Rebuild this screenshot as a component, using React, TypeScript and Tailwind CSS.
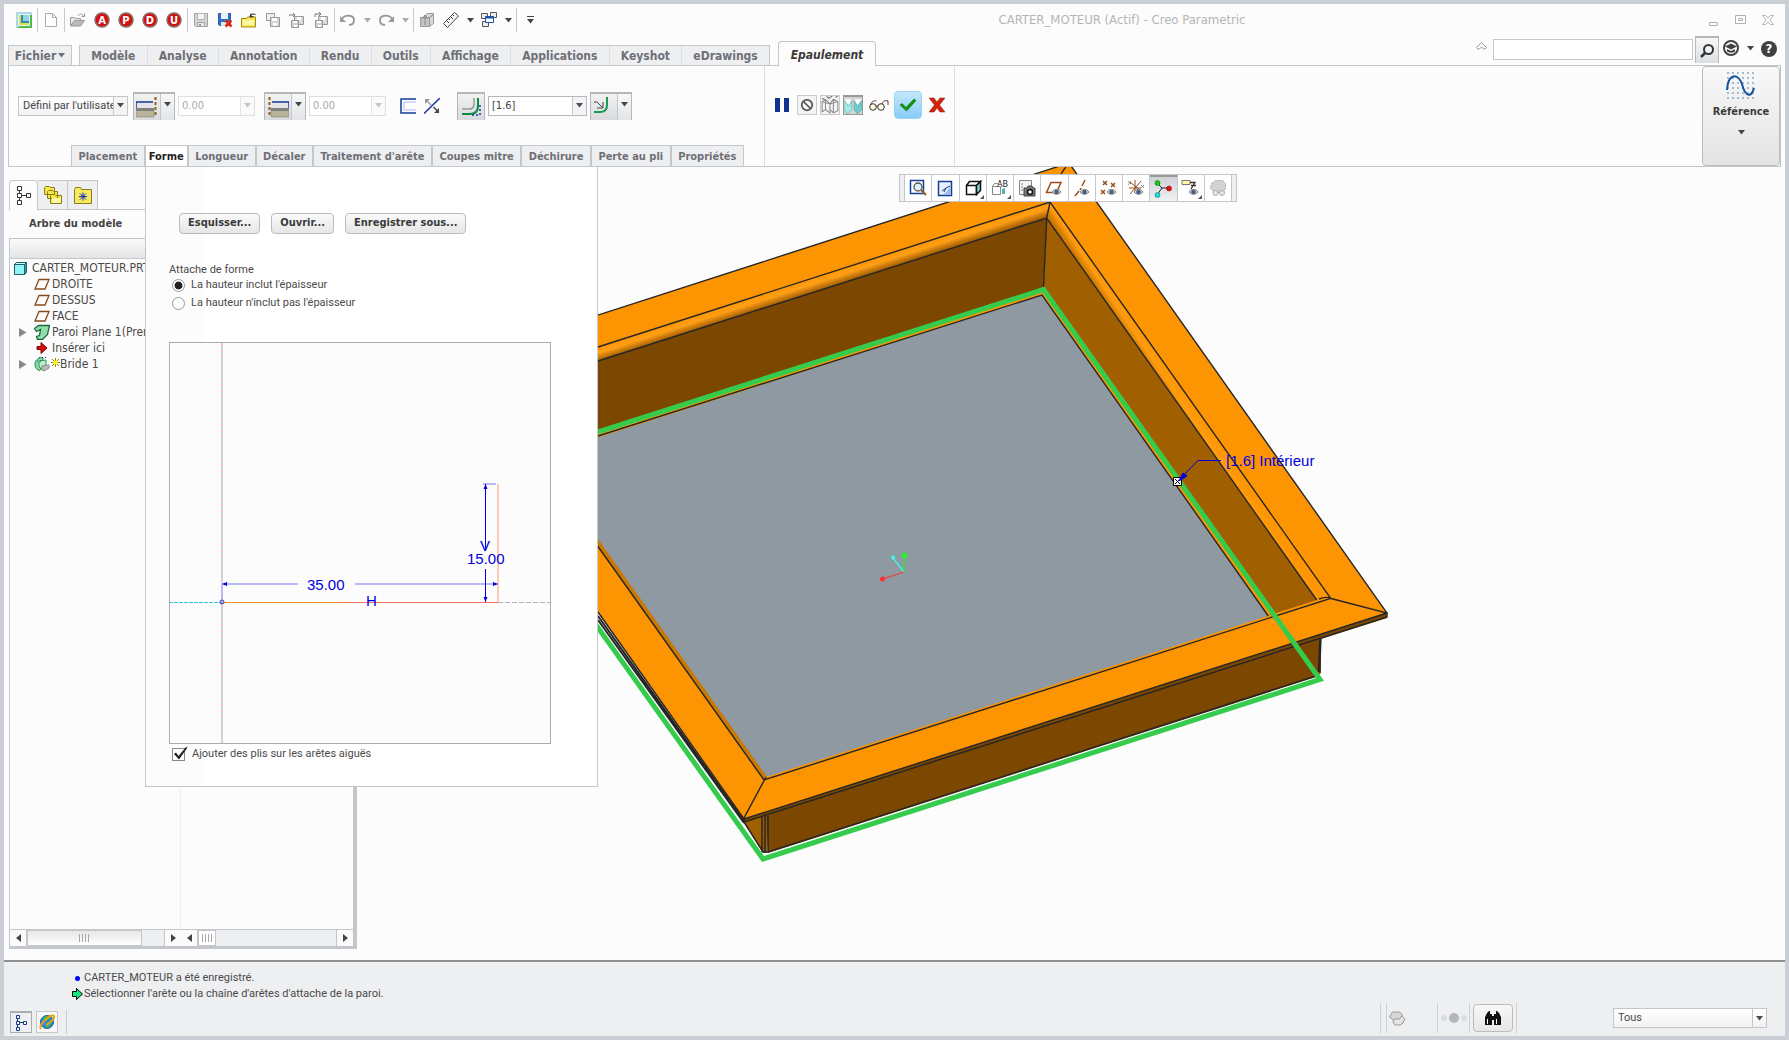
import { useState, ReactNode } from 'react';

interface IconProps {
  children: ReactNode;
  size?: number;
}

function Icon({ children, size = 16 }: IconProps) {
  return (
    <svg width={size} height={size} viewBox="0 0 16 16" fill="none" stroke="#999" aria-hidden="true" className="shrink-0">
      {children}
    </svg>
  );
}

function Caret({ color = '#444' }: { color?: string }) {
  return (
    <svg width="7" height="5" viewBox="0 0 7 5" aria-hidden="true" className="shrink-0">
      <path d="M0 0h7L3.5 4.5z" fill={color} />
    </svg>
  );
}

function Separator() {
  return <div className="w-px h-6 mx-px bg-[#c6c9cc]" />;
}

function ToolButton({ label, children }: { label: string; children: ReactNode }) {
  return (
    <button aria-label={label} className="w-6 h-6 flex items-center justify-center">
      {children}
    </button>
  );
}

function CaretButton({ label, color }: { label: string; color?: string }) {
  return (
    <button aria-label={label} className="w-[14px] h-6 flex items-center justify-center">
      <Caret color={color} />
    </button>
  );
}

function LetterIcon({ letter }: { letter: string }) {
  return (
    <svg width="16" height="16" viewBox="0 0 16 16" aria-hidden="true">
      <circle cx="8" cy="8" r="7" fill="#d01212" stroke="#8d6a6a" strokeWidth="1.5" />
      <text x="8" y="11.5" textAnchor="middle" fontSize="10" fontWeight="900" fill="#fff" className="font-['DejaVu_Sans']">
        {letter}
      </text>
    </svg>
  );
}

const floppy = (
  <>
    <path d="M1.5 1.5h13v13h-12l-1-1z" fill="#d5d5d5" stroke="#a2a2a2" />
    <path d="M4.500 1.500h7v6h-7z" fill="#f4f4f4" stroke="#b4b4b4" />
    <path d="M4.500 10.500h7v4h-7z" fill="#ececec" stroke="#a2a2a2" />
    <path d="M6 12h2v2H6z" fill="#999" stroke="none" />
  </>
);

const smallFloppy = (
  <>
    <path d="M5.500 4.500h9v8h-9z" fill="#d9d9d9" stroke="#999" />
    <path d="M8 5h4v3H8z" fill="#fff" stroke="none" />
    <path d="M2.500 8.500h7v7h-7z" fill="#d0d0d0" stroke="#999" />
    <path d="M4 9h4v2H4zM5 13h3v2H5z" fill="#fff" stroke="none" />
  </>
);

function QuickAccess() {
  return (
    <div className="flex items-center pl-2 shrink-0">
      <ToolButton label="Creo">
        <Icon>
          <rect x="0.5" y="0.5" width="15" height="15" fill="#a5d9ee" stroke="#b4d4e2" />
          <path d="M16 3v13H1l3-2h10V3z" fill="#55b848" stroke="none" />
          <path d="M2.500 2.500h11v11h-11z" fill="#d9e04c" stroke="#e6f3f8" />
          <path d="M5 3h8v8H5z" fill="#2b8fae" stroke="none" />
          <path d="M7 3h6v6H7z" fill="#8fd3e4" stroke="none" />
        </Icon>
      </ToolButton>
      <Separator />
      <ToolButton label="Nouveau">
        <Icon>
          <path d="M2.500 1.500h7l4 4v9h-11zM9.500 1.500v4h4" fill="#fff" stroke="#aaa" />
        </Icon>
      </ToolButton>
      <Separator />
      <ToolButton label="Ouvrir">
        <Icon>
          <path d="M.5 13.500v-8h4l1 1h5v2" fill="#e6e6e6" />
          <path d="M.5 14l4-5.500h10l-4 5.500z" fill="#bbb" />
          <path d="M8 4c1-2.500 4-2.500 5.500 0M14.500 1.500v3h-3" />
        </Icon>
      </ToolButton>
      {['A', 'P', 'D', 'U'].map((letter) => (
        <ToolButton key={letter} label={`Macro ${letter}`}>
          <LetterIcon letter={letter} />
        </ToolButton>
      ))}
      <Separator />
      <ToolButton label="Enregistrer">
        <Icon>{floppy}</Icon>
      </ToolButton>
      <ToolButton label="Supprimer les versions">
        <Icon>
          <path d="M1.500 1.500h12v12h-11l-1-1z" fill="#2f6fc4" stroke="#2a5aa0" />
          <path d="M4 1h7v6H4z" fill="#e8f2fb" stroke="none" />
          <path d="M4 10h6v4H4z" fill="#dfe7ef" stroke="none" />
          <path d="M8.500 8.500l6 6M14.500 8.500l-6 6" stroke="#e02a12" strokeWidth="2.5" />
        </Icon>
      </ToolButton>
      <ToolButton label="Dossier de travail">
        <Icon>
          <path d="M.5 15V6.500h5l1-1.500h8v10z" fill="#f5e94a" stroke="#a58a1c" />
          <path d="M2 8h11v5H2z" fill="#fbf7a4" stroke="none" />
          <path d="M9.500 4.500c0-2.500 3-3 5-2M10 1.500L9 5l3.500-.5" stroke="#222" />
        </Icon>
      </ToolButton>
      <ToolButton label="Copier la fenêtre">
        <Icon>
          <path d="M1.500 1.500h8v7h-8z" fill="#eee" />
          <path d="M5.500 5.500h9v9h-9z" fill="#d5d5d5" />
          <path d="M7 6h5v3H7zM8 11h4v3H8z" fill="#fff" stroke="none" />
        </Icon>
      </ToolButton>
      <ToolButton label="Enregistrer une copie">
        <Icon>
          {smallFloppy}
          <path d="M0 3h6M4 1l2 2-2 2" stroke="#777" />
        </Icon>
      </ToolButton>
      <ToolButton label="Enregistrer une sauvegarde">
        <Icon>
          {smallFloppy}
          <path d="M2 5V2h6M6 0l2 2-2 2" stroke="#777" />
        </Icon>
      </ToolButton>
      <Separator />
      <ToolButton label="Annuler">
        <Icon>
          <path d="M2 7c3-5 12-4 12 1 0 3-2 5-5 5" strokeWidth="1.800" />
          <path d="M0 4v6h6z" fill="#999" stroke="none" />
        </Icon>
      </ToolButton>
      <CaretButton label="Liste annuler" color="#aaa" />
      <ToolButton label="Rétablir">
        <Icon>
          <path d="M14 7C11 2 2 3 2 8c0 3 2 5 5 5" strokeWidth="1.800" />
          <path d="M16 4v6h-6z" fill="#999" stroke="none" />
        </Icon>
      </ToolButton>
      <CaretButton label="Liste rétablir" color="#aaa" />
      <Separator />
      <ToolButton label="Régénérer">
        <Icon>
          <path d="M1.500 5.500h9v9h-9z" fill="#c4c4c4" />
          <path d="M10.500 5.500l4-3v9l-4 3zM5 5.500l3-4h6.500v1l-4 3z" fill="#d9d9d9" />
          <path d="M3 7l3-4 3 4M6 13V4" stroke="#888" />
        </Icon>
      </ToolButton>
      <ToolButton label="Mesurer">
        <Icon>
          <path d="M.5 11.500L11.500.5l4 3.500L4.500 15.500z" fill="#f6f6f6" stroke="#444" />
          <path d="M4 9l2 2M6 7l1 1M8 5l2 2M10 3l1 1" stroke="#444" />
        </Icon>
      </ToolButton>
      <CaretButton label="Liste mesurer" />
      <ToolButton label="Fenêtres">
        <Icon>
          <path d="M.5 1.500h6v5h-6zM9.500.5h6v5h-6zM1.500 9.500h6v5h-6z" fill="#eee" stroke="#555" />
          <path d="M4.500 4.500h8v6h-8z" fill="#f7fbff" stroke="#1b53a5" />
          <path d="M4.500 5.500h8" stroke="#1b53a5" strokeWidth="2" />
        </Icon>
      </ToolButton>
      <CaretButton label="Liste fenêtres" />
      <Separator />
      <button aria-label="Personnaliser" className="w-6 h-6 flex flex-col items-center justify-center gap-[2px]">
        <span className="w-[7px] h-px bg-[#444]" />
        <Caret />
      </button>
    </div>
  );
}

const ribbonTabs = ['Modèle', 'Analyse', 'Annotation', 'Rendu', 'Outils', 'Affichage', 'Applications', 'Keyshot', 'eDrawings'];

function TabRow() {
  return (
    <div className="h-[29px] flex items-end px-1 text-[#6f6f76]">
      <button className="w-16 h-5 border border-b-0 border-[#c3c7cb] bg-[#eeeff1] text-[12px] font-bold flex items-center justify-center gap-[2px] shrink-0">
        Fichier
        <Caret color="#6f6f76" />
      </button>
      <div className="ml-[7px] w-[691px] h-5 flex border border-b-0 border-[#c3c7cb] bg-[#eeeff1] divide-x divide-[#dcdfe2] shrink-0">
        {ribbonTabs.map((tab) => (
          <button key={tab} className="flex-auto text-[12px] leading-[18px] font-bold px-[10px] whitespace-nowrap">
            {tab}
          </button>
        ))}
      </div>
      <button className="ml-2 -mb-px h-[25px] w-[98px] pt-[2px] relative border border-b-0 border-[#c3c7cb] rounded-t-sm bg-[#fcfcfc] text-[12px] font-bold italic text-[#3a3a3a] shrink-0">
        Epaulement
      </button>
      <div className="flex-1 h-full flex items-start justify-end">
        <button aria-label="Réduire le ruban" className="w-5 h-5 mr-[2px] flex items-center justify-center">
          <svg width="11" height="8" viewBox="0 0 11 8" fill="#fff" stroke="#999" aria-hidden="true">
            <path d="M.5 5.500l5-5 5 5-1.500 1.500h-1.500l-2-2-2 2H2z" />
          </svg>
        </button>
        <input aria-label="Rechercher" className="mt-[3px] w-[200px] h-[21px] border border-[#c3c7cb] bg-white px-1 text-[11px]" />
        <button aria-label="Lancer la recherche" className="ml-[2px] w-6 h-[27px] border border-t-2 border-b-0 border-[#b4b8bc] bg-linear-to-b from-[#f7f7f7] to-[#dcdfe3] flex items-center justify-center">
          <Icon>
            <circle cx="9.500" cy="6.500" r="4.500" stroke="#333" strokeWidth="2" fill="#eef6fb" />
            <path d="M6 10l-4 4" stroke="#333" strokeWidth="2.500" />
          </Icon>
        </button>
        <button aria-label="Centre de formation" className="ml-1 mt-1 w-4 h-4">
          <Icon>
            <circle cx="8" cy="8" r="7" fill="#fff" stroke="#404040" strokeWidth="2" />
            <path d="M2 6.500l6-3 6 3-6 3z" fill="#404040" stroke="none" />
            <path d="M4 9l4 2 4-2v2.500c-2 1.500-6 1.500-8 0z" fill="#404040" stroke="none" />
          </Icon>
        </button>
        <div className="w-[18px] flex justify-end">
          <CaretButton label="Liste formation" />
        </div>
        <button aria-label="Aide" className="ml-1 mt-[5px] w-4 h-4 rounded-full bg-[#404040] text-white text-[13px] leading-4 font-bold text-center">
          ?
        </button>
        <div className="w-1" />
      </div>
    </div>
  );
}

const thickness = (
  <>
    <path d="M0 16V6h17" stroke="#123a94" strokeWidth="1.500" />
    <path d="M1 7h16v6H1z" fill="#e4e4e6" stroke="none" />
    <path d="M0 14h18v7H0z" fill="#b9b49b" stroke="#777" strokeWidth="0.500" />
    <path d="M0 13.500h18" stroke="#808080" strokeWidth="3" />
    <path d="M19.500 1v20" stroke="#8a6014" strokeWidth="2" strokeDasharray="3 2" />
  </>
);

function SplitButton({ label, children }: { label: string; children: ReactNode }) {
  return (
    <div className="flex h-7 w-[42px] border border-t-2 border-b-0 border-[#b4b8bc] bg-linear-to-b from-[#f8f8f8] to-[#e2e4e7] shrink-0">
      <button aria-label={label} className="w-[27px] flex items-center justify-center border-r border-[#c3c7cb] bg-linear-to-b from-[#f2f2f2] to-[#d8dade]">
        {children}
      </button>
      <button aria-label={`Liste ${label}`} className="flex-1 pb-1 flex items-center justify-center">
        <Caret />
      </button>
    </div>
  );
}

interface ComboFieldProps {
  label: string;
  initial: string;
  disabled?: boolean;
}

function ComboField({ label, initial, disabled }: ComboFieldProps) {
  const [value, setValue] = useState(initial);

  return (
    <div className={disabled ? 'flex w-[77px] h-5 border border-[#dcdfe2] bg-white' : 'flex w-[99px] h-5 border border-[#b4b8bc] bg-white'}>
      <input
        aria-label={label}
        value={value}
        disabled={disabled}
        onChange={(e) => setValue(e.target.value)}
        className="flex-1 min-w-0 px-[3px] pt-px text-[11px] text-[#444] disabled:text-[#aaa]"
      />
      <button
        aria-label={`Liste ${label}`}
        disabled={disabled}
        className={disabled ? 'w-[14px] border-l border-[#e2e4e6] bg-[#fafafa] flex items-center justify-center' : 'w-[14px] border-l border-[#c3c7cb] bg-[#f2f3f4] flex items-center justify-center'}
      >
        <Caret color={disabled ? '#c4c4c4' : '#4a4a52'} />
      </button>
    </div>
  );
}

const panelTabs = ['Placement', 'Forme', 'Longueur', 'Décaler', "Traitement d'arête", 'Coupes mitre', 'Déchirure', 'Perte au pli', 'Propriétés'];

function Ribbon() {
  return (
    <div className="mx-1 h-[102px] border border-[#c3c7cb] flex">
      <div className="w-[756px] shrink-0 border-r border-[#dcdfe2] flex flex-col">
        <div className="flex-1 flex items-center pl-[9px]">
          <div className="relative w-[110px] h-5 shrink-0">
            <select
              aria-label="Type de forme"
              className="block appearance-none w-full h-5 border border-[#c3c7cb] bg-linear-to-b from-white to-[#f2f2f2] pl-1 pr-3 text-[11px] leading-[18px] text-[#444] font-['Roboto',sans-serif]"
            >
              <option>Défini par l'utilisateur</option>
            </select>
            <span className="absolute right-px top-px bottom-px w-[14px] border-l border-[#c3c7cb] bg-[#f4f4f4] flex items-center justify-center pointer-events-none">
              <Caret color="#4a4a52" />
            </span>
          </div>
          <div className="ml-[5px] flex items-center gap-[3px]">
            <SplitButton label="Première extrémité">
              <svg width="22" height="22" viewBox="0 0 22 22" fill="none" aria-hidden="true">{thickness}</svg>
            </SplitButton>
            <ComboField label="Première valeur" initial="0.00" disabled />
          </div>
          <div className="ml-[9px] flex items-center gap-[3px]">
            <SplitButton label="Seconde extrémité">
              <svg width="22" height="22" viewBox="0 0 22 22" fill="none" aria-hidden="true" className="-scale-x-100">{thickness}</svg>
            </SplitButton>
            <ComboField label="Seconde valeur" initial="0.00" disabled />
          </div>
          <div className="ml-[10px] flex">
            <ToolButton label="Changer de côté">
              <Icon>
                <path d="M16 1H1v14h15" stroke="#123a94" strokeWidth="1.500" />
                <path d="M16 4H4v8h12" stroke="#b5b5ff" />
              </Icon>
            </ToolButton>
            <ToolButton label="Inverser la direction">
              <Icon>
                <path d="M0 15.500L16 0" stroke="#123a94" strokeWidth="1.500" />
                <path d="M7 7L3 3" stroke="#999" strokeWidth="1.500" />
                <path d="M1 1h5L1 6z" fill="#999" stroke="none" />
                <path d="M9.500 9L13 12.500" stroke="#444" strokeWidth="1.500" />
                <path d="M15 15h-5l5-5z" fill="#444" stroke="none" />
              </Icon>
            </ToolButton>
          </div>
          <button aria-label="Rayon de pli" className="ml-[13px] w-7 h-7 border border-t-2 border-b-0 border-[#b4b8bc] bg-linear-to-b from-[#f2f2f2] to-[#d8dade] flex items-center justify-center">
            <svg width="20" height="20" viewBox="0 0 20 20" fill="none" aria-hidden="true">
              <path d="M1 12h7q5 0 5-5V1" stroke="#999" strokeWidth="1.500" />
              <path d="M1 17h8q8 0 8-8V1" stroke="#0b8a42" strokeWidth="2" />
              <path d="M11 18h8M19 8v10" stroke="#123a94" strokeWidth="1.500" strokeDasharray="2 2" />
            </svg>
          </button>
          <div className="ml-[3px] flex items-center gap-[3px]">
            <ComboField label="Rayon" initial="[1.6]" />
            <SplitButton label="Côté du rayon">
              <svg width="20" height="20" viewBox="0 0 20 20" fill="none" aria-hidden="true">
                <path d="M0 15h6q7 0 7-7V0" stroke="#1c9a55" strokeWidth="2" />
                <path d="M0 5h3l5 5M9 5v6H3" stroke="#444" />
              </svg>
            </SplitButton>
          </div>
        </div>
        <div role="tablist" className="h-[21px] ml-[62px] w-[673px] flex">
          {panelTabs.map((tab) => (
            <button
              key={tab}
              role="tab"
              aria-selected={tab === 'Forme'}
              className={
                tab === 'Forme'
                  ? 'px-[3px] pt-[2px] bg-white border border-b-0 border-[#c3c7cb] text-[11px] font-bold text-[#1f1f1f] whitespace-nowrap'
                  : 'flex-auto px-[5px] pt-[2px] bg-[#eeeff1] border border-b-0 border-[#c3c7cb] text-[11px] font-bold text-[#6f6f76] whitespace-nowrap'
              }
            >
              {tab}
            </button>
          ))}
        </div>
      </div>
      <div className="w-[190px] shrink-0 border-r border-[#dcdfe2] pl-2 pb-[22px] flex items-center">
        <button aria-label="Pause" className="w-5 h-5 ml-px flex items-center gap-1 pl-px">
          <span className="w-[5px] h-[14px] bg-[#103393]" />
          <span className="w-[5px] h-[14px] bg-[#103393]" />
        </button>
        <div className="ml-[3px] flex items-center gap-[3px]">
          <button aria-label="Sans aperçu" className="w-5 h-5 border border-[#c9c9c9] bg-[#f4f4f4] flex items-center justify-center">
            <Icon size={14}>
              <circle cx="8" cy="8" r="6" stroke="#555" strokeWidth="2" />
              <path d="M4 4l8 8" stroke="#555" strokeWidth="2" />
            </Icon>
          </button>
          <button aria-label="Aperçu filaire" className="w-5 h-5 border border-[#c9c9c9] bg-[#f4f4f4] flex items-center justify-center">
            <Icon size={18}>
              <path d="M1 5l3-2 4 4v8l-4-3-3 2zM8 7l3-4 4 2v8l-4 2-3-3M4 3v9M11 3v12M1 5l7 2 7-2" stroke="#888" strokeWidth=".9" />
              <path d="M5 0l2 2 3-2M1 2l2 1M13 1l2-1" stroke="#777" />
            </Icon>
          </button>
          <button aria-label="Aperçu attaché" className="w-5 h-5 border border-t-2 border-[#999] bg-[#d3d3d3] flex items-center justify-center">
            <Icon size={18}>
              <path d="M0 3l4 5 3-5v8l-4 4-3-4z" fill="#a4ebe6" stroke="#4aa6a4" strokeWidth=".5" />
              <path d="M9 3l3 5 4-5v8l-4 4-3-4z" fill="#6dcdca" stroke="#4aa6a4" strokeWidth=".5" />
              <path d="M0 2h7l-3 5zM9 2h7l-4 5z" fill="#fff" stroke="none" />
            </Icon>
          </button>
        </div>
        <button aria-label="Vérifier" className="ml-[6px] w-5 h-5 flex items-center justify-center">
          <svg width="20" height="14" viewBox="0 0 20 14" fill="none" stroke="#333" aria-hidden="true">
            <circle cx="4" cy="9" r="3.300" fill="#fffee0" />
            <circle cx="12" cy="9" r="3.300" fill="#fffee0" />
            <path d="M7 8h2M1.500 7c1-3 3-5 6-4M13 6c1-3 3-4 6-3v4" stroke="#6b2d2d" />
          </svg>
        </button>
        <button aria-label="Valider" className="ml-[5px] w-7 h-7 border border-[#9fd3f3] rounded-sm bg-linear-to-b from-[#c4e6fb] to-[#86cdf7] flex items-center justify-center">
          <svg width="18" height="14" viewBox="0 0 18 14" aria-hidden="true">
            <path d="M1 7l2-1.500 4 4L15 1l2 1.500L7.500 13z" fill="#0b9a0b" stroke="#066b06" strokeWidth=".6" />
          </svg>
        </button>
        <button aria-label="Annuler la fonction" className="ml-[7px] w-5 h-5 flex items-center">
          <Icon>
            <path d="M0 1h5l3 4 3-4h5l-5.500 7 5.500 7h-5l-3-4-3 4H0l5.500-7z" fill="#d42109" stroke="#8f1606" strokeWidth=".5" />
          </Icon>
        </button>
      </div>
      <div className="flex-1 flex justify-end">
        <button className="w-[78px] h-full border border-[#b9bdc1] rounded-sm bg-linear-to-b from-[#f8f8f8] to-[#e4e4e4] flex flex-col items-center pt-1 text-[#3a3a3a]">
          <svg width="30" height="30" viewBox="0 0 30 30" fill="none" aria-hidden="true">
            {[1, 6, 11, 16, 21, 26].map((y) => (
              <path key={y} d={`M1 ${y + 1}h28`} stroke="#a3bccb" strokeWidth="2" strokeDasharray="2 3" />
            ))}
            <path d="M1 19C2 2 12 2 16 13c3 12 9 15 12 4" stroke="#1550a0" strokeWidth="2" />
          </svg>
          <span className="mt-[3px] text-[11px] leading-4 font-bold">Référence</span>
          <span className="mt-[10px]">
            <Caret />
          </span>
        </button>
      </div>
    </div>
  );
}

const datum = <path d="M5 3.500h10l-4 9.500H1z" stroke="#8b4a1c" strokeWidth="1.300" />;

const treeItems = [
  { label: 'DROITE', icon: datum },
  { label: 'DESSUS', icon: datum },
  { label: 'FACE', icon: datum },
  {
    label: 'Paroi Plane 1(Prem',
    expandable: true,
    icon: <path d="M.5 4.500l4-3h11l-2 9-5 5h-5l-1-3 3-1 1-6-4 2z" fill="#93dcae" stroke="#1a6b3c" strokeWidth="1.300" />,
  },
  {
    label: 'Insérer ici',
    icon: <path d="M3 6.500h4v-4l6 5.500-6 5.500v-4H3z" fill="#d80d0d" stroke="#7d0606" />,
  },
  {
    label: 'Bride 1',
    expandable: true,
    isNew: true,
    icon: (
      <>
        <path d="M9 1.500c-5 0-8 3-8 7s3 6 5 6l1-2c-2-2-1-4 2-4z" fill="#8ddba8" stroke="#1f8a44" />
        <path d="M5 5l7-1v6l-5 3-2-3z" fill="#b8ecca" stroke="#2f9a55" />
        <path d="M8 10l7-1v3l-5 3-2-1z" fill="#bbb" stroke="#888" />
        <path d="M5 1.500h7M3 5h4" stroke="#173a9a" strokeDasharray="1 2" />
      </>
    ),
  },
];

function ScrollBar({ label, thumb }: { label: string; thumb: 'wide' | 'narrow' }) {
  return (
    <div aria-label={label} className="flex flex-1 h-[18px] bg-[#eeeff1] border-y border-[#c3c7cb]">
      <button aria-label="Défiler à gauche" className="w-[17px] bg-[#fafafa] border-r border-[#c3c7cb] flex items-center justify-center">
        <svg width="5" height="8" viewBox="0 0 5 8" aria-hidden="true"><path d="M5 0v8L0 4z" fill="#444" /></svg>
      </button>
      <div
        className={
          thumb === 'wide'
            ? 'w-[115px] border border-[#c3c7cb] bg-linear-to-b from-[#e8e8e8] to-white flex items-center justify-center gap-px'
            : 'w-[18px] border border-[#c3c7cb] bg-white flex items-center justify-center gap-px'
        }
      >
        {[0, 1, 2, 3].map((i) => (
          <span key={i} className="w-[2px] h-2 border-l border-[#a8a8a8]" />
        ))}
      </div>
      <div className="flex-1" />
      <button aria-label="Défiler à droite" className="w-[17px] bg-[#fafafa] border-l border-[#c3c7cb] flex items-center justify-center">
        <svg width="5" height="8" viewBox="0 0 5 8" aria-hidden="true"><path d="M0 0v8l5-4z" fill="#444" /></svg>
      </button>
    </div>
  );
}

function TreeIcon({ color }: { color: string }) {
  return (
    <svg width="14" height="20" viewBox="0 0 14 20" fill="#fff" stroke={color} aria-hidden="true">
      <path d="M2.500 5v9M5 9.500h4" />
      <path d="M.5.5h4v4h-4zM.5 7.500h4v4h-4zM.5 14.500h4v4h-4zM9.500 7.500h4v4h-4z" />
    </svg>
  );
}

function ModelTree() {
  return (
    <aside className="w-[348px] ml-[5px] mt-[13px] mb-[11px] shrink-0 flex flex-col">
      <div className="flex h-[30px]">
        <button aria-label="Arbre du modèle" className="w-[29px] border border-b-0 border-[#c3c7cb] rounded-t-sm flex items-center justify-center">
          <TreeIcon color="#333" />
        </button>
        <button aria-label="Navigateur de dossiers" className="w-[30px] border border-l-0 border-[#c3c7cb] bg-[#eeeff1] flex items-center justify-center">
          <svg width="20" height="20" viewBox="0 0 20 20" fill="#f5e94a" stroke="#8f7a1c" aria-hidden="true">
            <path d="M1.500 9.500v-7l1-1h4l1 1h4v7zM4.500 13.500v-7l1-1h4l1 1h4v7zM7.500 18.500v-8l1-1h3l1 1h6v8z" />
            <path d="M9 13h9v5H9z" fill="#fbf7a4" stroke="none" />
          </svg>
        </button>
        <button aria-label="Favoris" className="w-[30px] border border-l-0 border-[#c3c7cb] bg-[#eeeff1] flex items-center justify-center">
          <svg width="18" height="17" viewBox="0 0 18 17" aria-hidden="true">
            <path d="M.5 16.500v-14l1-2h5l1 2h10v14z" fill="#f5ea60" stroke="#8f7a1c" />
            <path d="M9 5.500v8M5 9.500h8M6 6.500l6 6M12 6.500l-6 6" stroke="#1728b8" />
          </svg>
        </button>
        <div className="flex-1 border-b border-[#c3c7cb]" />
      </div>
      <div className="h-7 pl-5 text-[11px] leading-7 font-bold text-[#444]">Arbre du modèle</div>
      <div className="flex-1 flex flex-col border border-r-4 border-b-2 border-[#c3c7cb]">
        <div className="h-5 border-b border-[#c3c7cb] bg-linear-to-b from-[#fafafa] to-[#e4e5e7]" />
        <div className="flex-1 flex">
          <ul className="w-[171px] pl-1 pt-px border-r border-[#eceff2] text-[12px] leading-4 text-[#4a4a4a] overflow-hidden whitespace-nowrap">
            <li className="flex items-center gap-[5px]">
              <svg width="13" height="13" viewBox="0 0 13 13" stroke="#1f5f63" aria-hidden="true">
                <path d="M.5 2.500h10v10H.5z" fill="#8ff3f7" />
                <path d="M.5 2.500l2-2h10l-2 2z" fill="#c9fbfc" />
                <path d="M12.500.5v10l-2 2v-10z" fill="#3aa0a5" />
              </svg>
              CARTER_MOTEUR.PRT
            </li>
            {treeItems.map((item) => (
              <li key={item.label} className="flex items-center pl-[5px]">
                <span className="w-[15px] flex items-center">
                  {item.expandable && (
                    <svg width="8" height="9" viewBox="0 0 8 9" aria-hidden="true"><path d="M0 0v9l7.500-4.500z" fill="#8a8a8a" /></svg>
                  )}
                </span>
                <Icon>{item.icon}</Icon>
                {item.isNew ? (
                  <svg width="9" height="9" viewBox="0 0 9 9" aria-hidden="true" className="ml-px mb-[3px]">
                    <path d="M4.500 0v9M0 4.500h9M1 1l7 7M8 1L1 8" stroke="#9a8a00" />
                    <circle cx="4.500" cy="4.500" r="2" fill="#ff0" />
                  </svg>
                ) : (
                  <span className="w-[2px]" />
                )}
                {item.label}
              </li>
            ))}
          </ul>
        </div>
        <div className="flex">
          <div className="w-[171px] flex"><ScrollBar label="Défilement arbre" thumb="wide" /></div>
          <ScrollBar label="Défilement colonnes" thumb="narrow" />
        </div>
      </div>
    </aside>
  );
}

function ModelView() {
  return (
    <svg className="w-full h-full" fill="none" aria-label="Modèle 3D">
      <defs>
        <linearGradient id="bendTop" gradientUnits="userSpaceOnUse" x1="890" y1="253" x2="894.500" y2="267">
          <stop offset="0" stopColor="#fd9602" />
          <stop offset="0.4" stopColor="#ff9f16" />
          <stop offset="1" stopColor="#955500" />
        </linearGradient>
        <linearGradient id="bendRight" gradientUnits="userSpaceOnUse" x1="1148" y1="340" x2="1136" y2="348">
          <stop offset="0" stopColor="#fd9602" />
          <stop offset="0.5" stopColor="#ff9c10" />
          <stop offset="1" stopColor="#c87500" />
        </linearGradient>
      </defs>
      <g transform="translate(-357 -167)">
        {/* parois extérieures sous le rebord */}
        <path d="M744 822L767 815V853H763z" fill="#a05f00" />
        <path d="M766 814L1321 637V673L1316 677 768 853z" fill="#7c4700" />
        <path d="M762 816V852M765 816V852M768 816V852M744 822L763 852H768L1316 676" stroke="#262626" strokeWidth="1.500" />
        <path d="M1320.500 637L1319 672" stroke="#262626" strokeWidth="2.500" />

        {/* rebord */}
        <path d="M400 379L1069 163 1387 613 744 819 400 333z" fill="#fd9502" />
        <path d="M400 416.500L1046.700 218 1043 290 400 493z" fill="#7c4700" />
        <path d="M1046.700 218L1317 600 1270 615 1043 290z" fill="#a05f00" />
        <path d="M400 410L1050 202 1046.700 218 400 424z" fill="url(#bendTop)" />
        <path d="M1050 202L1330.700 598 1317 601 1046.700 218z" fill="url(#bendRight)" />
        <path d="M400 501L1042 295 1268 616 766 777 598 540 400 261z" fill="#8f99a1" />
        <path d="M1043 293L1274 614H1268L1042 295z" fill="#fd9502" />
        <path d="M598 539L767 777 764 780 598 546z" fill="#c97800" />
        <path d="M1387 613V618L744 823V819z" fill="#7c4700" />

        <g stroke="#262626" strokeWidth="1.400">
          <path d="M400 379L1069 163 1387 613 744 819 598 612" />
          <path d="M1066 167Q1058 176 1050 202L1046.700 218 1043.500 288" />
          <path d="M598 347L1050 202 1330.700 598.300 764 780 598 546.500" />
          <path d="M598 361L1046.700 218 1316.700 600" />
          <path d="M598 436L1042 295 1268.300 616" />
          <path d="M1319 599Q1326 596 1331 598.500L1387 613V617L744 822V818L766 777" />
          <path d="M598 616L744 821M598 620L744 823" strokeWidth="2" />
        </g>

        <path d="M400 495L1043.500 289.500 1320 679.500 763 859 400 350" stroke="#35cc4d" strokeWidth="5" />

        {/* repère */}
        <path d="M904 572L883 579" stroke="#ff3838" strokeWidth="1.300" />
        <path d="M904 572L893 558" stroke="#3ff5f5" strokeWidth="1.300" />
        <path d="M904 572V555" stroke="#35e535" strokeWidth="1.500" />
        <circle cx="882.500" cy="579" r="2.500" fill="#ff3030" />
        <circle cx="893" cy="557.500" r="2" fill="#3ff5f5" />
        <circle cx="904.500" cy="555.500" r="2.800" fill="#25f525" />

        {/* note de rayon */}
        <path d="M1173.500 477.500h8v8h-8z" fill="#fff" stroke="#000" />
        <path d="M1175 479l5 5M1180 479l-5 5" stroke="#000" />
        <path d="M1178 481L1198 460.500H1221" stroke="#0000d8" />
        <path d="M1179 481L1183 473 1187 476z" fill="#0000d8" stroke="#0000d8" />
        <text x="1226" y="466" fontSize="15" fill="#0000e0" className="font-['Liberation_Sans']">
          [1.6] Intérieur
        </text>
      </g>
    </svg>
  );
}

const eye = (
  <>
    <path d="M7 13c2-3.500 7-3.500 9 0-2 3-7 3-9 0z" fill="#d9dee2" stroke="#8a8072" />
    <circle cx="11.500" cy="13" r="1.800" fill="#3d5f8a" stroke="#3d5f8a" />
  </>
);

const corner = <path d="M20 16v4h-4z" fill="#555" stroke="none" />;

const viewTools = [
  {
    label: 'Ajuster',
    icon: (
      <>
        <path d="M1.500 1.500h13v13h-13z" fill="#fff" stroke="#153f94" strokeWidth="1.500" />
        <circle cx="9" cy="8" r="4" fill="#dff0f8" stroke="#555" strokeWidth="1.300" />
        <path d="M12 11l5 5" stroke="#9a5a28" strokeWidth="2" />
      </>
    ),
  },
  {
    label: 'Redessiner',
    icon: (
      <>
        <path d="M2.500 2.500h13v14h-13z" fill="#e8f0fd" stroke="#153f94" strokeWidth="1.500" />
        <path d="M4 16c6-1 9-5 11-11v11z" fill="#9dbbe8" stroke="none" />
        <path d="M8 13l2-4 4-2M6 12l4-3" stroke="#153f94" />
      </>
    ),
  },
  {
    label: "Style d'affichage",
    icon: (
      <>
        <path d="M2.500 6.500h10v9h-10zM2.500 6.500l3-4h11l-4 4" fill="#fff" stroke="#111" strokeWidth="1.500" />
        <path d="M12.500 6.500l4-4v9l-4 4z" fill="#7fd6d6" stroke="#111" strokeWidth="1.500" />
        {corner}
      </>
    ),
  },
  {
    label: 'Orientations enregistrées',
    icon: (
      <>
        <path d="M1.500 7.500h8v8h-8zM1.500 7.500l2-3h3" fill="#fff" stroke="#888" />
        <path d="M11 10l3-1v6h-3z" fill="#4fb3b3" stroke="none" />
        <text x="6" y="8" fontSize="9" fill="#222" stroke="none">AB</text>
        {corner}
      </>
    ),
  },
  {
    label: 'Gestionnaire de vues',
    icon: (
      <>
        <path d="M1.500 1.500h12v14h-12z" fill="#f3f3f3" stroke="#888" />
        <path d="M3 5h2M3 8h2M3 11h2" stroke="#888" />
        <path d="M6 9h3l1-2h4l1 2h2v8H6z" fill="#777" stroke="#444" />
        <circle cx="12" cy="13" r="2.500" fill="#fff" stroke="#111" strokeWidth="1.500" />
      </>
    ),
  },
  { label: 'Plans', icon: <><path d="M6 3.500h10l-4.500 10h-10z" stroke="#9a4e20" strokeWidth="1.500" />{eye}</> },
  { label: 'Axes', icon: <><path d="M12 1L9 7M8 9l-1 2M6 12l-4 5" stroke="#9a4e20" strokeWidth="1.500" />{eye}</> },
  { label: 'Points', icon: <><path d="M3 2l4 4M7 2L3 6M11 4l4 4M15 4l-4 4M1 11l4 4M5 11l-4 4" stroke="#9a4e20" strokeWidth="1.500" />{eye}</> },
  { label: 'Repères', icon: <><path d="M3 3l11 9M14 2L3 15M8 1v12M2 9h12" stroke="#9a4e20" /><path d="M1 2l3 3M4 2L1 6M14 6l3 3M17 6l-3 3" stroke="#888" />{eye}</> },
  {
    label: 'Centre de rotation',
    pressed: true,
    icon: (
      <>
        <path d="M3 3l5 5M8 8l7 0M8 8l-5 7" stroke="#222" />
        <circle cx="3.500" cy="3" r="2.500" fill="#18c818" stroke="#0a7a0a" strokeWidth=".6" />
        <circle cx="15" cy="8.500" r="2.500" fill="#e01010" stroke="#8a0808" strokeWidth=".6" />
        <circle cx="3.500" cy="15" r="2.500" fill="#25dada" stroke="#0c7f7f" strokeWidth=".6" />
      </>
    ),
  },
  {
    label: 'Annotations',
    icon: (
      <>
        <path d="M0 1.500h8v4H0z" fill="#ffff9c" stroke="#777" />
        <path d="M8 3.500h5L9 10M9 6.500h5" stroke="#333" strokeWidth="1.300" />
        {eye}
        {corner}
      </>
    ),
  },
  {
    label: 'Simulation',
    icon: (
      <>
        <path d="M2.500 4.500l4-3h7l3 3v5l-2 4h-9l-4-4z" fill="#d2d2d2" stroke="#a8a8a8" strokeDasharray="2 1" />
        <circle cx="6.500" cy="14" r="2.500" fill="#e9e9e9" stroke="#aaa" />
        <circle cx="13" cy="14" r="2.500" fill="#e9e9e9" stroke="#aaa" />
      </>
    ),
  },
];

function ViewToolbar() {
  return (
    <div className="absolute left-[895px] top-[7px] w-[338px] h-7 flex border border-[#c3c7cb] bg-[#eeeff1] px-1">
      <div className="flex-1 flex divide-x divide-[#c3c7cb] border-x border-[#c3c7cb] bg-white">
        {viewTools.map((tool) => (
          <button
            key={tool.label}
            aria-label={tool.label}
            className={
              tool.pressed
                ? 'flex-1 flex items-center justify-center bg-linear-to-b from-[#cfd2d6] to-[#f0f1f3] border-t-2 border-t-[#999]'
                : 'flex-1 flex items-center justify-center'
            }
          >
            <svg width="18" height="18" viewBox="0 0 18 18" fill="none" aria-hidden="true" className="overflow-visible">{tool.icon}</svg>
          </button>
        ))}
      </div>
    </div>
  );
}

function SketchPreview() {
  return (
    <svg width="382" height="402" viewBox="170 343 380 400" fill="none" aria-label="Esquisse" className="block border border-[#acacae] bg-[#fcfcfc]">
      <path d="M222 342V744" stroke="#eec4d2" strokeWidth="2" />
      <path d="M222 342V744" stroke="#b4dce8" strokeWidth="2" strokeDasharray="2 3" />
      <path d="M169 602.500H222" stroke="#38bfd0" strokeDasharray="4 1" />
      <path d="M498 602.500H551" stroke="#a9b6c4" strokeDasharray="5 2" />
      <path d="M222 602.500H498" stroke="#ee7a5c" />
      <path d="M222 602.500H340" stroke="#e89a20" />
      <path d="M498 484V602" stroke="#fbcdb8" strokeWidth="2" />
      <path d="M222 584H298M355 584H498M483 484H496M222 584V602" stroke="#b9b9f5" strokeWidth="2" />
      <path d="M485.500 484V550M485.500 569V602" stroke="#0000e0" />
      <path d="M222 584l5-2v4zM498 584l-5-2v4zM485.500 484l-2 5h4zM485.500 602l-2-5h4z" fill="#0000e0" />
      <circle cx="222" cy="602" r="2" stroke="#3a3ab8" />
      <g fontSize="15" fill="#0000e0" className="font-['Liberation_Sans']">
        <text x="307" y="590">35.00</text>
        <text x="467" y="564">15.00</text>
        <text x="366" y="606">H</text>
        <text x="480" y="551">V</text>
      </g>
    </svg>
  );
}

function ShapePanel() {
  const [heightMode, setHeightMode] = useState('included');
  const [addBends, setAddBends] = useState(true);

  const buttonClass =
    "h-[21px] border border-[#b9bdc1] rounded-sm bg-linear-to-b from-[#fafafa] to-[#e6e6e6] px-2 text-[11px] font-bold text-[#3a3a3a] font-['DejaVu_Sans_Condensed']";
  const radioClass =
    'appearance-none w-[13px] h-[13px] rounded-full border border-[#999] bg-white checked:bg-radial checked:from-[#222] checked:from-45% checked:to-white checked:to-55%';

  return (
    <section className="absolute left-[141px] top-0 w-[453px] border border-t-0 border-[#c3c7cb] bg-linear-to-r from-[#fcfcfc] from-[57px] to-white to-[57px] text-[11px] text-[#4a4a4a] pl-[23px] pt-[46px] pb-6 font-['Roboto',sans-serif]">
      <div className="pl-[10px] flex gap-[11px]">
        <button className={buttonClass}>Esquisser...</button>
        <button className={buttonClass}>Ouvrir...</button>
        <button className={buttonClass}>Enregistrer sous...</button>
      </div>
      <fieldset className="mt-7 mb-[31px]">
        <legend className="leading-[15px]">Attache de forme</legend>
        <label className="flex items-center gap-[6px] pl-[3px] leading-4">
          <input type="radio" name="height" className={radioClass} checked={heightMode === 'included'} onChange={() => setHeightMode('included')} />
          La hauteur inclut l'épaisseur
        </label>
        <label className="flex items-center gap-[6px] pl-[3px] mt-[2px] leading-4">
          <input type="radio" name="height" className={radioClass} checked={heightMode === 'excluded'} onChange={() => setHeightMode('excluded')} />
          La hauteur n'inclut pas l'épaisseur
        </label>
      </fieldset>
      <SketchPreview />
      <label className="mt-[2px] flex items-center gap-[4px] pl-[3px] leading-4">
        <span className="grid">
          <input
            type="checkbox"
            checked={addBends}
            onChange={(e) => setAddBends(e.target.checked)}
            className="peer appearance-none col-start-1 row-start-1 self-end w-[13px] h-[13px] border border-[#888] bg-white"
          />
          <svg width="16" height="14" viewBox="0 0 16 14" aria-hidden="true" className="col-start-1 row-start-1 pointer-events-none invisible peer-checked:visible">
            <path d="M2 7l2-1.500L6.500 9 14 0l1.500.5L7 12.500z" fill="#1f1f1f" />
          </svg>
        </span>
        Ajouter des plis sur les arêtes aiguës
      </label>
    </section>
  );
}

function StatusBar() {
  return (
    <footer className="h-[76px] border-t-2 border-[#909090] bg-[#eeeff1] flex text-[11px] text-[#4a4a4a] font-['Roboto',sans-serif]">
      <div className="flex-1 pt-2">
        <p className="pl-[71px] flex items-center gap-1 leading-4">
          <span className="w-[5px] h-[5px] rounded-full bg-[#0000ff]" />
          CARTER_MOTEUR a été enregistré.
        </p>
        <p className="pl-[68px] flex items-center gap-px leading-4">
          <svg width="11" height="12" viewBox="0 0 11 12" aria-hidden="true">
            <path d="M.5 3.500h4v-3l6 5.500-6 5.500v-3h-4z" fill="#12e87a" stroke="#000" />
          </svg>
          Sélectionner l'arête ou la chaîne d'arêtes d'attache de la paroi.
        </p>
        <div className="mt-2 pl-[6px] flex items-center gap-1">
          <button aria-label="Afficher l'arbre" className="w-[22px] h-[22px] border border-t-2 border-[#a9adb1] flex items-center justify-center">
            <svg width="14" height="20" viewBox="0 0 14 20" fill="#fff" stroke="#123a94" aria-hidden="true">
              <path d="M3.500 5v9M6 9.500h3" stroke="#333" />
              <path d="M2.500 2.500h3v3h-3zM2.500 8.500h3v3h-3zM2.500 14.500h3v3h-3zM9.500 8.500h3v3h-3z" />
            </svg>
          </button>
          <button aria-label="Afficher le navigateur" className="w-[22px] h-[22px] border border-[#c3c7cb] bg-[#f8f8f8] flex items-center justify-center">
            <Icon>
              <circle cx="8" cy="8" r="6.500" fill="#2c8ad8" stroke="#1a5f8f" />
              <path d="M4 3l5-1 2 3-4 2zM8 9l4-1-2 5-3 1z" fill="#3cb54a" stroke="none" />
              <path d="M2 15C-1 12 11-1 15 2c1 3-4 7-8 9" stroke="#e3a512" strokeWidth="2" />
            </Icon>
          </button>
          <div className="ml-1 w-px h-6 bg-white border-l border-[#c9ccd0]" />
        </div>
      </div>
      <div className="flex items-center self-end h-9">
        <div className="flex gap-[5px]">
          <div className="w-px h-[30px] bg-[#cfd2d5]" />
          <div className="w-px h-[30px] bg-[#cfd2d5]" />
        </div>
        <button aria-label="Géométrie" className="ml-[2px] w-4 h-4">
          <Icon>
            <path d="M5 8l3-2h5l3 3-2 4-3 2H6l-2-3z" fill="#e4e4e4" stroke="#999" />
            <path d="M.5 7l3-5h7l3 3-3 4h-4l-2 1z" fill="#d6d6d6" stroke="#999" />
          </Icon>
        </button>
        <div className="ml-8 w-px h-[30px] bg-[#cfd2d5]" />
        <div className="w-[31px] flex items-center justify-center gap-[2px]">
          <span className="w-[6px] h-[6px] rounded-full bg-[#dcdddf]" />
          <span className="w-[10px] h-[10px] rounded-full bg-[#b5b7b9]" />
          <span className="w-[6px] h-[6px] rounded-full bg-[#dcdddf]" />
        </div>
        <div className="w-px h-[30px] bg-[#cfd2d5]" />
        <button aria-label="Outil de recherche" className="mx-[3px] w-10 h-7 border border-[#b9bdc1] rounded-sm bg-linear-to-b from-[#f8f8f8] to-[#e6e6e6] flex items-center justify-center">
          <Icon>
            <path d="M2 3l2-2h1v3h2v11H0V7zM14 3l-2-2h-1v3H9v11h7V7z" fill="#111" stroke="none" />
            <path d="M7 6h2v4H7z" fill="#111" stroke="none" />
            <path d="M2.500 9v5M11.500 9v5" stroke="#fff" />
          </Icon>
        </button>
        <div className="w-px h-[30px] bg-[#cfd2d5]" />
        <div className="relative ml-24 mr-[18px] w-[154px] h-5">
          <select aria-label="Filtre de sélection" className="block appearance-none w-full h-5 border border-[#c3c7cb] bg-linear-to-b from-white to-[#f2f2f2] pl-1 text-[11px] leading-[18px]">
            <option>Tous</option>
          </select>
          <span className="absolute right-px top-px bottom-px w-[14px] border-l border-[#c3c7cb] flex items-center justify-center pointer-events-none">
            <Caret color="#4a4a52" />
          </span>
        </div>
      </div>
    </footer>
  );
}

export default function App() {
  return (
    <div className="h-screen flex flex-col border-4 border-[#c9cfd5] bg-[#fcfcfc] overflow-hidden font-['DejaVu_Sans_Condensed','DejaVu_Sans',sans-serif]">
      <header>
        <div className="h-8 flex items-center">
          <QuickAccess />
          <h1 className="flex-1 text-center text-[13px] text-[#b5b5b5]">CARTER_MOTEUR (Actif) - Creo Parametric</h1>
          <div className="pr-[5px] flex items-center gap-[3px]">
            <ToolButton label="Réduire">
              <svg width="10" height="12" viewBox="0 0 10 12" fill="#fff" stroke="#b0b0b0" aria-hidden="true"><path d="M.5 8.500h8v3h-8z" /></svg>
            </ToolButton>
            <ToolButton label="Agrandir">
              <svg width="12" height="10" viewBox="0 0 12 10" fill="#fff" stroke="#b0b0b0" aria-hidden="true"><path d="M.5.5h10v8H.5zM3.500 3.500h4v2h-4z" /></svg>
            </ToolButton>
            <ToolButton label="Fermer">
              <svg width="12" height="10" viewBox="0 0 12 10" fill="#fff" stroke="#b0b0b0" aria-hidden="true"><path d="M.5.5h3L6 3 8.500.5h3L8 5l3.500 4.500h-3L6 7 3.500 9.500h-3L4 5z" /></svg>
            </ToolButton>
          </div>
        </div>
        <TabRow />
        <Ribbon />
      </header>
      <main className="flex-1 min-h-0 relative flex">
        <ModelTree />
        <div className="flex-1 min-w-0">
          <ModelView />
        </div>
        <ViewToolbar />
        <ShapePanel />
      </main>
      <StatusBar />
    </div>
  );
}
